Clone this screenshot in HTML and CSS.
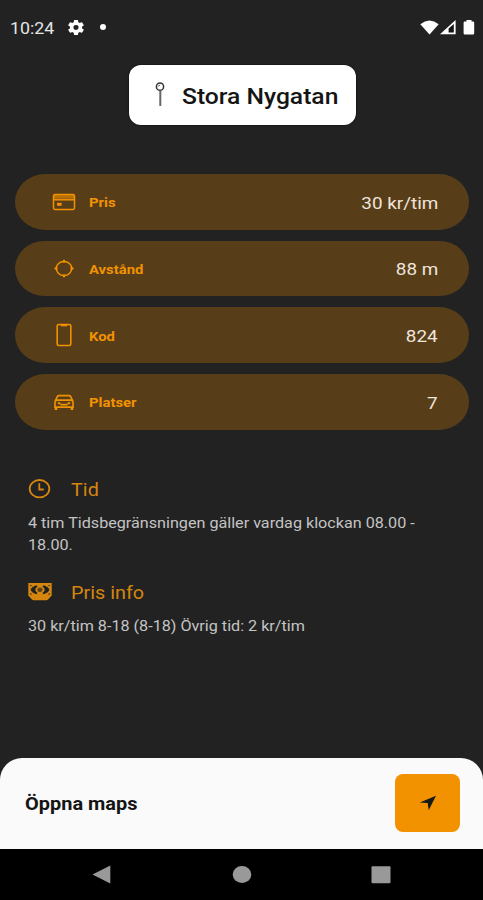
FILE: index.html
```html
<!DOCTYPE html>
<html lang="sv">
<head>
    <meta charset="UTF-8">
    <meta name="viewport" content="width=device-width, initial-scale=1.0">
    <title>Stora Nygatan - Parkering</title>
    <link rel="stylesheet" href="styles.css">
</head>
<body>

    <header class="statusbar">
        <span class="clock">10:24</span>
        <svg class="gear" width="16" height="15" viewBox="2 2 20 20" preserveAspectRatio="none" fill="#fff"><path d="M19.43 12.98c.04-.32.07-.64.07-.98s-.03-.66-.07-.98l2.11-1.65c.19-.15.24-.42.12-.64l-2-3.46c-.12-.22-.39-.3-.61-.22l-2.49 1c-.52-.4-1.08-.73-1.69-.98l-.38-2.65A.49.49 0 0 0 14 2h-4c-.25 0-.46.18-.49.42l-.38 2.65c-.61.25-1.17.59-1.69.98l-2.49-1c-.23-.09-.49 0-.61.22l-2 3.46c-.13.22-.07.49.12.64l2.11 1.65c-.04.32-.07.65-.07.98s.03.66.07.98l-2.11 1.65c-.19.15-.24.42-.12.64l2 3.46c.12.22.39.3.61.22l2.49-1c.52.4 1.08.73 1.69.98l.38 2.65c.03.24.24.42.49.42h4c.25 0 .46-.18.49-.42l.38-2.65c.61-.25 1.17-.59 1.69-.98l2.49 1c.23.09.49 0 .61-.22l2-3.46c.12-.22.07-.49-.12-.64zM12 15.2a3.2 3.2 0 1 1 0-6.4 3.2 3.2 0 0 1 0 6.4z"/></svg>
        <span class="dot"></span>
        <div class="signals">
            <svg width="19" height="15" viewBox="0 0 19 15" fill="#fff"><path d="M.3 4.2Q9.5-3.2 18.7 4.2L9.5 14.6z"/></svg>
            <svg width="16" height="15" viewBox="0 0 16 15"><path d="M0 14.3 15.6 0v14.3z" fill="#fff"/><path d="M8.6 8.6 13.8 4v8.6H8.6z" fill="#151515"/></svg>
            <svg class="battery" width="12" height="15" viewBox="0 0 12 15" fill="#fff"><path d="M3.5 0h5v1.6H10q1.2 0 1.2 1.2v10.4q0 1.2-1.2 1.2H1.8Q.6 14.4.6 13.2V2.8q0-1.2 1.2-1.2h1.7z"/></svg>
        </div>
    </header>

    <main class="content">
        <div class="street">
            <svg width="10" height="26" viewBox="0 0 10 26" fill="none"><circle cx="5" cy="4.7" r="3.6" stroke="#333" stroke-width="1.5"/><path d="M3.3 4.4 4.8 2.8" stroke="#222" stroke-width="1"/><path d="M5.3 8.5V24" stroke="#666" stroke-width="2"/></svg>
            <h1>Stora Nygatan</h1>
        </div>

        <ul class="facts">
            <li>
                <svg width="24" height="24" viewBox="0 0 24 24" fill="none" stroke="#f39200" stroke-width="1.5"><path d="M1.5 4.8h21v4h-21z" fill="#b96d05" stroke="none"/><rect x="1.5" y="4.6" width="21" height="14.8" rx="1.6"/><path d="M1.5 9.8h21"/><path d="M5 14.3h4.6" stroke-width="3"/></svg>
                <span class="label">Pris</span>
                <span class="value">30 kr/tim</span>
            </li>
            <li>
                <svg width="24" height="24" viewBox="0 0 24 24" fill="none" stroke="#f39200" stroke-width="1.5"><ellipse cx="12" cy="12.5" rx="7.7" ry="7"/><path d="M12 3.700v2.800M12 18.500v2.800M2.500 12.500h3M18.500 12.500h3" stroke-width="2"/></svg>
                <span class="label">Avstånd</span>
                <span class="value">88 m</span>
            </li>
            <li>
                <svg width="24" height="24" viewBox="0 0 24 24" fill="none" stroke="#f39200" stroke-width="1.6"><rect x="5.2" y="1.5" width="13.6" height="21" rx="1.5"/><path d="M8.8 2.3h6.4" stroke-width="2"/></svg>
                <span class="label">Kod</span>
                <span class="value">824</span>
            </li>
            <li>
                <svg width="24" height="24" viewBox="0 -0.6 24 24" fill="none" stroke="#f39200" stroke-width="1.6"><path d="M3 11 5.3 6q.5-1 1.6-1h10.2q1.1 0 1.6 1L21 11M4.8 9.500h14.400q1.800.300 1.800 2v5H3v-5q0-1.700 1.800-2zM8.300 14h7.400"/><path d="M4 16.500v3M20 16.500v3" stroke-width="2.600"/><path d="M5.800 12.600h2.600M15.600 12.600h2.600" stroke-width="2"/></svg>
                <span class="label">Platser</span>
                <span class="value">7</span>
            </li>
        </ul>

        <section class="info">
            <h2>
                <svg width="24" height="20" viewBox="0 0 24 20" fill="none" stroke="#d5860f" stroke-width="1.8"><ellipse cx="11.5" cy="9.700" rx="9.8" ry="8.7"/><path d="M11.300 4.300v6.200h4.500"/></svg>
                <span>Tid</span>
            </h2>
            <p>4 tim Tidsbegränsningen gäller vardag klockan 08.00 - 18.00.</p>
        </section>

        <section class="info">
            <h2>
                <svg width="24" height="20" viewBox="0 0 24 20"><path d="M.3 1h23.400v12.600L20.500 17q-1 1.300-2.300 1.300H5.800q-1.300 0-2.300-1.300L.3 13.600z" fill="#d5860f"/><path d="M8.300 3.200Q3.200 5 2.600 7.700q.6 2.700 5.700 4.500l1.300-1.300Q7.300 9.500 7.300 7.700t2.300-3.200zM15.700 3.200q5.100 1.800 5.700 4.500-.6 2.700-5.700 4.500l-1.300-1.300q2.300-1.400 2.300-3.200t-2.300-3.200zM2.300 3h2L2.300 4.600zM21.700 3h-2l2 1.600zM2.300 10.800l2 1.600h-2zM21.700 10.800l-2 1.600h2z" fill="#222"/><ellipse cx="12" cy="7.700" rx="2.600" ry="2.300" fill="#5e431b"/></svg>
                <span>Pris info</span>
            </h2>
            <p>30 kr/tim 8-18 (8-18) Övrig tid: 2 kr/tim</p>
        </section>
    </main>

    <footer class="sheet">
        <span class="sheet-text">Öppna maps</span>
        <button type="button" aria-label="Öppna maps">
            <svg width="18" height="16" viewBox="0 0 18 16" fill="#151a17"><path d="M17 .8 9.700 15.200 8.700 8 .800 7.400z"/></svg>
        </button>
    </footer>

    <nav class="android-nav">
        <svg width="20" height="20" viewBox="0 0 20 20" fill="#999"><path d="M.5 9.500 18.300.400v18.200z"/></svg>
        <svg width="20" height="20" viewBox="0 0 20 20" fill="#999"><ellipse cx="10" cy="9.500" rx="9.300" ry="8.400"/></svg>
        <svg width="20" height="20" viewBox="0 0 20 20" fill="#999"><rect x=".500" y="1.200" width="19" height="17" rx="1"/></svg>
    </nav>

</body>
</html>
```

FILE: styles.css
```css
* { box-sizing: border-box; }
body { font-family: Roboto, sans-serif; margin: 0; background-color: #222; color: white; display: flex; flex-direction: column; height: 900px; overflow: hidden; }
h1, h2, p, ul { margin: 0; padding: 0; font-weight: 400; }
svg { display: block; flex-shrink: 0; }

/* Texten dras ut lite på bredden */
.clock, h1, .label, .value, .info h2 span, .info p, .sheet-text { transform: scaleX(1.11); transform-origin: left center; white-space: nowrap; }

.statusbar { height: 54px; padding: 0 8px 0 10px; display: flex; align-items: center; flex-shrink: 0; }
.clock { font-size: 16px; width: 58px; padding-top: 2px; color: #e6e6e6; }
.dot { width: 6px; height: 6px; border-radius: 50%; background-color: white; margin-left: 16px; }
.signals { display: flex; margin-left: auto; gap: 1px; }
.battery { margin-left: 6px; }

.content { flex-grow: 1; padding: 11px 14px 0 15px; }
.street { width: 227.500px; height: 60px; margin: 0 0 49px 113.500px; padding: 0 0 0 26px; background-color: white; border-radius: 12px; box-shadow: 0 0 2px #000; display: flex; align-items: center; gap: 17.500px; }
.street h1 { font-size: 22px; font-weight: 500; padding-top: 3px; transform: scaleX(1.12); color: #151515; }

.facts { list-style: none; display: grid; gap: 11.200px; }
.facts li { height: 55.500px; padding: 0 31px 0 37px; background-color: #573e19; border-radius: 30px / 28px; display: flex; align-items: center; }
.label { font-size: 13px; font-weight: 700; padding-top: 2px; color: #f39200; margin-left: 13px; transform: scaleX(1.14); }
.value { font-size: 17px; padding-top: 2px; color: #efe5dc; margin-left: auto; transform-origin: right center; }

.info { padding: 0 0 0 13px; margin-top: 23px; }
.facts + .info { margin-top: 47px; }
.info h2 { display: flex; align-items: center; gap: 19px; height: 24px; font-size: 18px; color: #d5860f; }
.info h2 span { padding-top: 2px; transform: scaleX(1.1); }
.info p { font-size: 14.500px; line-height: 22px; width: 365px; margin-top: 12px; color: #c4c4c4; white-space: normal; transform: scaleX(1.114); }

.sheet { height: 91px; padding: 0 23px 2px 25px; background-color: #fafafa; border-radius: 22px 22px 0 0; display: flex; align-items: center; justify-content: space-between; flex-shrink: 0; }
.sheet-text { font-size: 17.500px; font-weight: 700; padding-top: 2px; transform: scaleX(1.14); color: #151515; }
.sheet button { width: 65px; height: 58px; border: none; border-radius: 8px; background-color: #f39200; display: flex; align-items: center; justify-content: center; }

.android-nav { height: 51px; padding: 0 92px; background-color: black; display: flex; align-items: center; justify-content: space-between; flex-shrink: 0; }
```
